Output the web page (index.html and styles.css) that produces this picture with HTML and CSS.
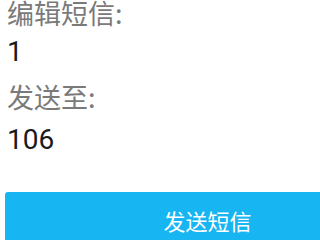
FILE: index.html
```html
<!DOCTYPE html>
<html lang="zh">
<head>
<meta charset="utf-8">
<link rel="stylesheet" href="styles.css">
</head>
<body>
<div class="page">
  <div class="label first">编辑短信:</div>
  <div class="value">1</div>
  <div class="label second">发送至:</div>
  <div class="value">106</div>
  <button class="send">发送短信</button>
</div>
</body>
</html>
```
FILE: styles.css
```css
html, body {
  margin: 0;
  padding: 0;
  overflow: hidden;
  background: #ffffff;
}
.page {
  width: 420px;
  display: flex;
  flex-direction: column;
  align-items: flex-start;
  padding-left: 7px;
}
.label {
  font-family: "Noto Sans CJK SC", "Noto Sans", sans-serif;
  font-size: 27px;
  line-height: 26px;
  color: #7a7a7a;
}
.label.second {
  margin-top: 16px;
}
.value {
  font-family: Roboto, "Noto Sans", sans-serif;
  font-size: 28px;
  line-height: 32px;
  color: #1a1a1a;
  margin-top: 10px;
}
.label.second + .value {
  margin-top: 14px;
}
.send {
  margin-top: 36px;
  margin-left: -2px;
  width: 405px;
  height: 56px;
  border: none;
  border-radius: 3px;
  background: #17b5f2;
  color: #ffffff;
  font-family: "Noto Sans CJK SC", sans-serif;
  font-size: 22px;
  line-height: 56px;
  padding: 0;
  text-align: center;
}
```
